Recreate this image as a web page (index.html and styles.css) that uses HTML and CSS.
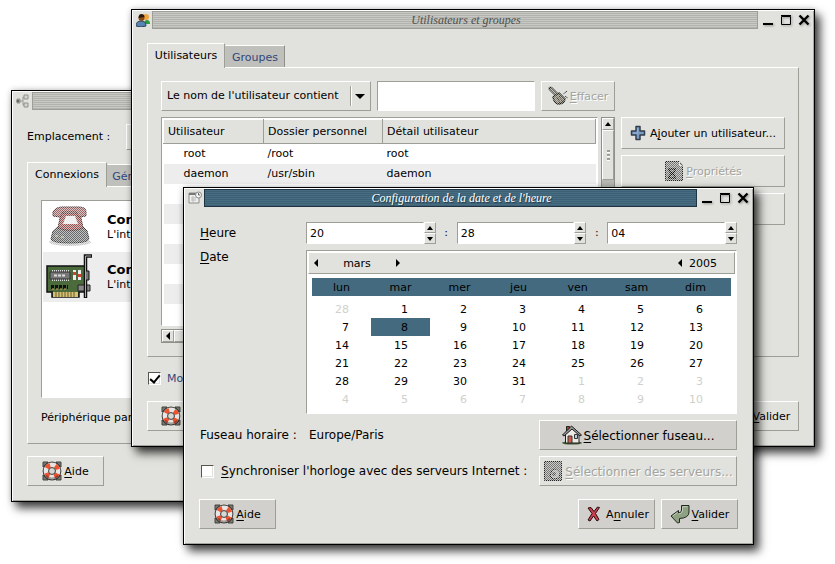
FILE: index.html
```html
<!DOCTYPE html>
<html lang="fr">
<head>
<meta charset="utf-8">
<title>Configuration du système</title>
<link rel="stylesheet" href="styles.css">
</head>
<body>
<svg class="defs" aria-hidden="true">
  <defs>
    <pattern id="stipple" width="2" height="2" patternUnits="userSpaceOnUse"><path d="M0 0h1v1H0zM1 1h1v1H1z" fill="#e1e2dd"/></pattern>
    <pattern id="stipple-white" width="2" height="2" patternUnits="userSpaceOnUse"><path d="M0 0h1v1H0zM1 1h1v1H1z" fill="#fff"/></pattern>
    <symbol id="i-help" viewBox="0 0 20 20">
      <path d="M1 1h5l-5 5zM19 1v5l-5-5zM19 19h-5l5-5zM1 19v-5l5 5z" fill="#777872" stroke="#44453f"/>
      <circle cx="10" cy="10" r="6.200" fill="none" stroke="#3a3a38" stroke-width="6.400"/>
      <circle cx="10" cy="10" r="6" fill="none" stroke="#e6e6e4" stroke-width="4.800"/>
      <circle cx="10" cy="10" r="6" fill="none" stroke="#ee5230" stroke-width="4.600" stroke-dasharray="4.200 5.220" stroke-dashoffset="-2.600"/>
      <path d="M4 14.500a7.500 7.500 0 0 0 12 0" fill="none" stroke="#000" stroke-opacity=".3" stroke-width="2"/>
      <circle cx="10" cy="10" r="3.400" fill="#d8d9d4" stroke="#444"/>
    </symbol>
    <symbol id="i-cancel" viewBox="0 0 20 20">
      <path d="M4 4l3-.5 3 4L13.500 3l2 .5-4 6 3.500 6-2 1.500-3.500-5L6 17l-2-1 4-6.500z" fill="#c8414f" stroke="#2b0d10"/>
    </symbol>
    <symbol id="i-ok" viewBox="0 0 20 20">
      <path d="M11.500 1.500h7.500v6.500q0 6-9.500 6.500v4L7.500 19 1 12l7.500-5.500V9q3 0 3-3z" fill="#8ea183" stroke="#20281e"/>
      <path d="M12.500 2.700h5M3 11.800l4.500-3.300M12.500 3v4q-1 3-4 3" stroke="#c2cfb8" fill="none"/>
    </symbol>
    <symbol id="i-home" viewBox="0 0 20 20">
      <ellipse cx="10" cy="18" rx="10" ry="1.600" fill="#3e5a35"/>
      <path d="M3.500 9v9H17V9L10 3z" fill="#eceae4" stroke="#222"/>
      <path d="M4.500 6V1.500h3V4z" fill="#b6402f" stroke="#222"/>
      <path d="M.5 10L9.500 1l10 9-1.500 1-8-7-8 7z" fill="#999" stroke="#1b1b1b"/>
      <path d="M6 11h4v7H6z" fill="#d0604b" stroke="#333"/>
      <path d="M12.500 9.500h3v4h-3z" fill="#bcd" stroke="#333"/>
    </symbol>
    <symbol id="i-plus" viewBox="0 0 16 16">
      <path d="M6 1.500h4V6h4.500v4H10v4.500H6V10H1.500V6H6z" fill="#7b9cc4" stroke="#333c48" stroke-width="1.500" stroke-linejoin="round"/>
      <path d="M7.500 3v5H3" fill="none" stroke="#93b0d4"/>
    </symbol>
    <symbol id="i-clear" viewBox="0 0 20 20">
      <path d="M2.500 2.500L10 10" stroke="#22231f" stroke-width="4" stroke-linecap="round"/>
      <path d="M2.500 2.500l7 7" stroke="#a5a298" stroke-width="1.500"/>
      <path d="M5 11l6-4 6 6q-1 5-7 5-4-1-5-7z" fill="#8b8573" stroke="#22211c" stroke-width="1.500"/>
      <path d="M9 11l3 6M11 10l4 6M15 8l4-3M17 10l3 2" stroke="#36342c"/>
      <rect width="20" height="20" fill="url(#stipple)" opacity=".6"/>
    </symbol>
    <symbol id="i-props" viewBox="0 0 18 20">
      <path d="M.5.500h14l3 3.500v15.500H.5z" fill="#777" stroke="#222"/>
      <path d="M3 8h8M3 17h8M4 8q0 3 3 4.500-3 1.500-3 4.500M10 8q0 3-3 4.500 3 1.500 3 4.500" stroke="#111" fill="none" stroke-width="1.500"/>
      <path d="M14.500 1v3.500h3" stroke="#eee" fill="none"/>
      <rect width="18" height="20" fill="url(#stipple)" opacity=".8"/>
    </symbol>
    <symbol id="i-server" viewBox="0 0 18 20">
      <path d="M.5.500h17v19H.5z" fill="#777" stroke="#222"/>
      <path d="M6 15l2-6 4-1 4 4-1 5-6 1z" fill="#aaa" stroke="#222"/>
      <circle cx="10" cy="13" r="2" fill="#555"/>
      <rect width="18" height="20" fill="url(#stipple)" opacity=".8"/>
    </symbol>
    <symbol id="w-min" viewBox="0 0 12 12"><path d="M1 10h10" stroke="#000" stroke-width="2"/></symbol>
    <symbol id="w-max" viewBox="0 0 12 12"><path d="M1.500 2.500h9v8h-9zM1 1.500h10" fill="none" stroke="#000"/></symbol>
    <symbol id="w-close" viewBox="0 0 12 12"><path d="M1.500 1.500l9 9M10.500 1.500l-9 9" stroke="#000" stroke-width="2.400"/></symbol>
    <symbol id="a-up" viewBox="0 0 6 4"><path d="M0 4h6L3 0z"/></symbol>
    <symbol id="a-down" viewBox="0 0 6 4"><path d="M0 0h6L3 4z"/></symbol>
    <symbol id="a-left" viewBox="0 0 4 8"><path d="M4 0v8L0 4z"/></symbol>
    <symbol id="a-right" viewBox="0 0 4 8"><path d="M0 0v8l4-4z"/></symbol>
  </defs>
</svg>

<main class="desktop">

  <section class="window window-network" aria-label="Réseau">
    <header class="titlebar">
      <svg class="app-icon" viewBox="0 0 14 14" aria-hidden="true"><path d="M4 7h3M7 7V3h2M7 7v4h2" stroke="#999" fill="none"/><path d="M1 5h3v4H1zM8 1h4v4H8zM8 9h4v4H8z" fill="#d4d4d0" stroke="#90918c"/><circle cx="2" cy="7" r="1.500" fill="#666"/></svg>
      <h2 class="title"></h2>
    </header>
    <div class="body">
      <div class="location">
        <label for="place">Emplacement :</label>
        <select id="place" class="raised place"><option></option></select>
      </div>
      <nav class="tabs tabs-network"><button class="tab active">Connexions</button><button class="tab">Général</button></nav>
      <div class="panel network-panel">
        <ul class="sunken connections">
          <li>
            <svg viewBox="0 0 48 46" aria-hidden="true">
              <ellipse cx="25" cy="38" rx="21" ry="4" fill="#c6c6c6"/>
              <path d="M14 22h23l5 5 2 8q-2 4-19 4T6 35l2-8z" fill="#66686a" stroke="#333"/>
              <path d="M16 9h19l3 15q-12 5-25 0z" fill="#955252" stroke="#4c3030"/>
              <path d="M8 8q3-5 9-5h17q7 0 7 5v4l-7 1-3-5H18l-3 5-7-1z" fill="#9c6a68" stroke="#4c3030"/>
              <path d="M21 12h9l3 8H18z" fill="#e8e8e8"/><path d="M10 32h3M16 33h3" stroke="#d6cf7a"/>
              <rect width="48" height="46" fill="url(#stipple-white)" opacity=".6"/>
            </svg>
            <div><strong>Connexion</strong><span>L'interface</span></div>
          </li>
          <li>
            <svg viewBox="0 0 48 46" aria-hidden="true">
              <path d="M2 12h38v26h-6v5H7v-5H2z" fill="#4c6b3d" stroke="#111" stroke-width="1.500"/>
              <path d="M8 38h25v5H8z" fill="#d6c277"/><path d="M11 38v5M14 38v5M17 38v5M20 38v5M23 38v5M26 38v5M29 38v5" stroke="#6a5a28"/>
              <path d="M7 17h17M7 26h17" stroke="#ddd" stroke-width="2" stroke-dasharray="1 1"/>
              <path d="M5 18h20v7H5z" fill="#777" stroke="#333"/><path d="M9 21.500h12" stroke="#ddd" stroke-width="2" stroke-dasharray="3 1"/>
              <path d="M29.500 16v10M34.500 16v10" stroke="#eee" stroke-width="3"/><path d="M29.500 18v3M34.500 20v3" stroke="#c43" stroke-width="3"/>
              <path d="M6 33h17" stroke="#111" stroke-width="4" stroke-dasharray="3 1"/><path d="M7 35h15" stroke="#d9ad55" stroke-dasharray="2 2"/>
              <path d="M33 31h12v6H33z" fill="#888" stroke="#222"/>
              <path d="M47 2h-6.500v42" fill="none" stroke="#111" stroke-width="3.500"/><path d="M46 2h-5.500v41" fill="none" stroke="#aaa"/>
              <path d="M41 17h3v9h-3" fill="#777" stroke="#111"/>
            </svg>
            <div><strong>Connexion</strong><span>L'interface</span></div>
          </li>
        </ul>
        <p class="gateway">Périphérique par</p>
      </div>
      <footer class="actions"><button class="raised button"><svg class="icon" aria-hidden="true"><use href="#i-help"/></svg><span><u>A</u>ide</span></button></footer>
    </div>
  </section>

  <section class="window window-users" aria-label="Utilisateurs et groupes">
    <header class="titlebar">
      <svg class="app-icon" viewBox="0 0 14 14" aria-hidden="true"><path d="M8 11q0-4 3-4t3 4z" fill="#2f9a3b"/><circle cx="10" cy="4" r="3" fill="#f0a63a"/><path d="M0 13q0-5 5-5t5 5q-5 2-10 0z" fill="#5684b5" stroke="#345"/><circle cx="5.500" cy="5" r="3" fill="#8a4c15"/><path d="M2.500 5q0-4 3-4t3 3z" fill="#2a1a10"/></svg>
      <h2 class="title">Utilisateurs et groupes</h2>
      <div class="controls">
        <button aria-label="Réduire"><svg><use href="#w-min"/></svg></button><button aria-label="Agrandir"><svg><use href="#w-max"/></svg></button><button aria-label="Fermer"><svg><use href="#w-close"/></svg></button>
      </div>
    </header>
    <div class="body">
      <nav class="tabs tabs-users"><button class="tab active">Utilisateurs</button><button class="tab">Groupes</button></nav>
      <div class="panel">
        <div class="search">
          <div class="combo">
            <select class="raised" aria-label="Critère"><option>Le nom de l'utilisateur contient</option></select>
            <span class="combo-arrow"><svg viewBox="0 0 10 5" aria-hidden="true"><path d="M0 0h10L5 5z"/></svg></span>
          </div>
          <input class="sunken query" type="text" aria-label="Recherche">
          <button class="raised button" disabled><svg class="icon" aria-hidden="true"><use href="#i-clear"/></svg><span><u>E</u>ffacer</span></button>
        </div>
        <div class="manage">
          <div class="scroller">
            <div class="sunken tree">
              <table>
                <colgroup><col class="c-user"><col class="c-home"><col></colgroup>
                <thead><tr><th>Utilisateur</th><th>Dossier personnel</th><th>Détail utilisateur</th></tr></thead>
                <tbody>
                  <tr><td>root</td><td>/root</td><td>root</td></tr>
                  <tr><td>daemon</td><td>/usr/sbin</td><td>daemon</td></tr>
                  <tr><td></td><td></td><td></td></tr><tr><td></td><td></td><td></td></tr><tr><td></td><td></td><td></td></tr><tr><td></td><td></td><td></td></tr><tr><td></td><td></td><td></td></tr><tr><td></td><td></td><td></td></tr><tr><td></td><td></td><td></td></tr>
                </tbody>
              </table>
            </div>
            <div class="vscroll"><button class="raised" aria-label="Monter"><svg class="arrow-v"><use href="#a-up"/></svg></button><div class="raised thumb"></div></div>
            <div class="hscroll"><button class="raised" aria-label="Gauche"><svg class="arrow-h"><use href="#a-left"/></svg></button><div class="raised thumb"></div></div>
          </div>
          <div class="side">
            <button class="raised button"><svg class="icon-small" aria-hidden="true"><use href="#i-plus"/></svg><span>A<u>j</u>outer un utilisateur...</span></button>
            <button class="raised button" disabled><svg class="icon" aria-hidden="true"><use href="#i-props"/></svg><span><u>P</u>ropriétés</span></button>
            <button class="raised button" disabled aria-label="Supprimer"></button>
          </div>
        </div>
      </div>
      <div class="show-all"><input class="check" type="checkbox" id="all" checked><label for="all">Mon</label></div>
      <footer class="actions">
        <button class="raised button" aria-label="Aide"><svg class="icon" aria-hidden="true"><use href="#i-help"/></svg></button>
        <button class="raised button push"><svg class="icon" aria-hidden="true"><use href="#i-ok"/></svg><span><u>V</u>alider</span></button>
      </footer>
    </div>
  </section>

  <section class="window window-time focused" aria-label="Configuration de la date et de l'heure">
    <header class="titlebar">
      <svg class="app-icon" viewBox="0 0 14 14" aria-hidden="true"><path d="M1 2h10v10H1z" fill="#eee" stroke="#8c8d88"/><path d="M1 3h10" stroke="#777" stroke-width="2"/><path d="M3 7h5M3 9h5M5 5v6" stroke="#bbb"/><circle cx="10.500" cy="4" r="3" fill="#f6f6f6" stroke="#888"/><path d="M10.500 2v2H12" stroke="#666" fill="none"/></svg>
      <h2 class="title">Configuration de la date et de l'heure</h2>
      <div class="controls">
        <button aria-label="Réduire"><svg><use href="#w-min"/></svg></button><button aria-label="Agrandir"><svg><use href="#w-max"/></svg></button><button aria-label="Fermer"><svg><use href="#w-close"/></svg></button>
      </div>
    </header>
    <div class="body">
      <form class="form">
        <div class="line">
          <label class="name" for="hour"><u>H</u>eure</label>
          <div class="time">
            <div class="spin"><input id="hour" class="sunken" type="text" value="20"><button type="button" class="raised" aria-label="Plus"><svg class="arrow-v"><use href="#a-up"/></svg></button><button type="button" class="raised" aria-label="Moins"><svg class="arrow-v"><use href="#a-down"/></svg></button></div>
            <span class="colon">:</span>
            <div class="spin"><input class="sunken" type="text" value="28" aria-label="Minutes"><button type="button" class="raised" aria-label="Plus"><svg class="arrow-v"><use href="#a-up"/></svg></button><button type="button" class="raised" aria-label="Moins"><svg class="arrow-v"><use href="#a-down"/></svg></button></div>
            <span class="colon">:</span>
            <div class="spin"><input class="sunken" type="text" value="04" aria-label="Secondes"><button type="button" class="raised" aria-label="Plus"><svg class="arrow-v"><use href="#a-up"/></svg></button><button type="button" class="raised" aria-label="Moins"><svg class="arrow-v"><use href="#a-down"/></svg></button></div>
          </div>
        </div>
        <div class="line line-top">
          <span class="name"><u>D</u>ate</span>
          <div class="sunken calendar">
            <div class="raised cal-head">
              <button type="button" aria-label="Mois précédent"><svg class="arrow-h"><use href="#a-left"/></svg></button><span class="month">mars</span><button type="button" aria-label="Mois suivant"><svg class="arrow-h"><use href="#a-right"/></svg></button>
              <button type="button" class="push" aria-label="Année précédente"><svg class="arrow-h"><use href="#a-left"/></svg></button><span class="year">2005</span>
            </div>
            <table>
              <thead><tr><th>lun</th><th>mar</th><th>mer</th><th>jeu</th><th>ven</th><th>sam</th><th>dim</th></tr></thead>
              <tbody>
                <tr><td class="other">28</td><td>1</td><td>2</td><td>3</td><td>4</td><td>5</td><td>6</td></tr>
                <tr><td>7</td><td class="selected">8</td><td>9</td><td>10</td><td>11</td><td>12</td><td>13</td></tr>
                <tr><td>14</td><td>15</td><td>16</td><td>17</td><td>18</td><td>19</td><td>20</td></tr>
                <tr><td>21</td><td>22</td><td>23</td><td>24</td><td>25</td><td>26</td><td>27</td></tr>
                <tr><td>28</td><td>29</td><td>30</td><td>31</td><td class="other">1</td><td class="other">2</td><td class="other">3</td></tr>
                <tr class="other"><td>4</td><td>5</td><td>6</td><td>7</td><td>8</td><td>9</td><td>10</td></tr>
              </tbody>
            </table>
          </div>
        </div>
        <div class="line">
          <span class="name">Fuseau horaire :</span><span class="zone">Europe/Paris</span>
          <button type="button" class="raised button wide push"><svg class="icon" aria-hidden="true"><use href="#i-home"/></svg><span><u>S</u>électionner fuseau...</span></button>
        </div>
        <div class="line">
          <input class="check" type="checkbox" id="sync"><label for="sync" class="sync"><u>S</u>ynchroniser l'horloge avec des serveurs Internet :</label>
          <button type="button" class="raised button wide push" disabled><svg class="icon" aria-hidden="true"><use href="#i-server"/></svg><span><u>S</u>électionner des serveurs...</span></button>
        </div>
      </form>
      <footer class="actions">
        <button class="raised button"><svg class="icon" aria-hidden="true"><use href="#i-help"/></svg><span><u>A</u>ide</span></button>
        <button class="raised button push"><svg class="icon" aria-hidden="true"><use href="#i-cancel"/></svg><span>A<u>n</u>nuler</span></button>
        <button class="raised button"><svg class="icon" aria-hidden="true"><use href="#i-ok"/></svg><span><u>V</u>alider</span></button>
      </footer>
    </div>
  </section>
</main>
</body>
</html>
```
FILE: styles.css
```css
* { box-sizing: border-box; }

body {
  margin: 0;
  background: #fff;
  color: #000;
  font: 11px/14px "DejaVu Sans", sans-serif;
}

button, input, select { font: inherit; color: inherit; margin: 0; padding: 0; border-radius: 0; }
button { border: 0; background: none; }
svg { display: block; flex: none; }
u { text-underline-offset: 2px; text-decoration-thickness: 1px; text-decoration-skip-ink: none; }
table { border-collapse: collapse; table-layout: fixed; width: 100%; }
th { font-weight: normal; text-align: left; }
p, ul, h2 { margin: 0; padding: 0; list-style: none; }

.defs { position: absolute; width: 0; height: 0; }
.desktop { position: relative; min-height: 100vh; overflow: hidden; }

/* Bevels */
.raised { border: 1px solid; border-color: #fff #9d9e96 #9d9e96 #fff; background: #e1e2dd; }
.sunken { border: 1px solid; border-color: #9d9e96 #fff #fff #9d9e96; background: #fff; }

/* Windows */
.window {
  position: absolute;
  border: 1px solid #000;
  background: #e1e2dd;
  box-shadow: inset 1px 1px #fff, inset -1px -1px #a5a69f, 5px 6px 9px rgba(0, 0, 0, .75), 0 0 6px rgba(0, 0, 0, .2);
  padding: 1px;
}
.window-network { left: 11px; top: 90px; width: 420px; }
.window-users { left: 131px; top: 9px; width: 684px; }
.window-time { left: 183px; top: 187px; width: 571px; }

.titlebar { display: flex; height: 18px; }
.app-icon { width: 14px; height: 14px; margin: 2px 2px 0 3px; }
.title {
  flex: 1;
  padding-left: 22px;
  border: 1px solid;
  border-color: #9d9e96;
  background: repeating-linear-gradient(#c8c9c4 0 1px, #b2b3ae 1px 2px);
  color: #50514d;
  font: italic 12px/17px "Liberation Serif", serif;
  text-align: center;
}
.focused .title {
  border-color: #1f3442;
  background: repeating-linear-gradient(#466d82 0 1px, #3d6074 1px 2px);
  color: #fff;
  text-shadow: 1px 1px #233c4a;
}
.controls { display: flex; padding: 3px 0 0 1px; }
.controls button { width: 18px; display: flex; justify-content: center; filter: drop-shadow(1px 1px 1px rgba(0, 0, 0, .35)); }
.controls svg { width: 12px; height: 12px; }

.body { padding: 14px; }
.actions { display: flex; gap: 6px; }
.push { margin-left: auto; }

.button { display: flex; align-items: center; justify-content: center; gap: 2px; min-width: 77px; height: 30px; white-space: nowrap; }
.button span { padding-top: 2px; }
.focused .button:not(:disabled) { background: #d2d0cc; }
.button:disabled { color: #a3a49d; text-shadow: 1px 1px #fff; }
.icon { width: 20px; height: 20px; }
.icon-small { width: 16px; height: 16px; margin-right: 2px; }

/* Tabs */
.tabs { display: grid; justify-content: start; align-items: end; height: 24px; }
.tabs-network { grid-template-columns: 80px 54px; }
.tabs-users { grid-template-columns: 78px 60px; }
.tab { height: 22px; padding-top: 2px; border: 1px solid; border-color: #fff #8f908a transparent #c0c1bc; border-bottom: 0; background: #bfc0bb; color: #32477c; }
.tab.active { height: 25px; margin-bottom: -1px; padding: 0; border-color: #fff #9d9e96 transparent #fff; background: #e1e2dd; color: #000; position: relative; z-index: 1; }
.panel { border: 1px solid; border-color: #fff #9d9e96 #9d9e96 #fff; padding: 13px; }

/* Network */
.location { display: flex; align-items: center; height: 26px; margin-bottom: 12px; }
.place { width: 160px; height: 26px; margin-left: 16px; appearance: none; }
.network-panel { margin-bottom: 12px; }
.connections { min-height: 198px; padding: 1px; }
.connections li { display: flex; align-items: center; gap: 14px; height: 50px; padding-left: 2px; }
.connections li:nth-child(even) { background: #ededed; }
.connections svg { width: 48px; height: 46px; }
.connections strong { display: block; font-size: 13px; line-height: 16px; }
.connections span { display: block; }
.gateway { padding: 13px 0 5px; }

/* Users */
.search { display: flex; gap: 6px; margin-bottom: 6px; }
.combo { display: grid; width: 210px; }
.combo > * { grid-area: 1 / 1; }
.combo select { appearance: none; height: 30px; padding-left: 5px; }
.combo-arrow { justify-self: end; align-self: center; display: flex; align-items: center; width: 21px; height: 20px; padding-left: 4px; border-left: 1px solid #9d9e96; box-shadow: inset 1px 0 #fff; pointer-events: none; }
.combo-arrow svg { width: 10px; height: 5px; }
.query { width: 158px; height: 30px; }
.search .button { min-width: 74px; }

.manage { display: flex; gap: 6px; }
.scroller { flex: 1; display: grid; grid-template-columns: 1fr 14px; grid-template-rows: auto 14px; gap: 3px; }
.tree { padding: 1px; }
.tree th { height: 24px; padding: 0 4px; border: 1px solid; border-color: #fff #9d9e96 #9d9e96 #fff; background: #e1e2dd; white-space: nowrap; }
.tree td { height: 20px; padding: 0 4px; }
.tree td:first-child { padding-left: 20px; }
.tree tbody tr:nth-child(even) { background: #ededed; }
.c-user { width: 100px; }
.c-home { width: 119px; }
.vscroll, .hscroll { display: flex; border: 1px solid #8f908a; background: #b7b8b3; }
.vscroll { flex-direction: column; }
.vscroll button { display: grid; place-items: center; height: 12px; }
.vscroll .thumb { height: 50px; display: grid; place-items: center; }
.vscroll .thumb::after { content: ""; width: 3px; height: 11px; background: repeating-linear-gradient(#9d9e96 0 2px, #fff 2px 3px, transparent 3px 4px); }
.hscroll button { display: grid; place-items: center; width: 12px; }
.hscroll .thumb { width: 200px; }
.arrow-v { width: 6px; height: 4px; }
.arrow-h { width: 4px; height: 8px; }

.side { display: flex; flex-direction: column; gap: 6px; width: 164px; }
.side .button { height: 32px; }
.show-all { display: flex; align-items: center; gap: 6px; height: 16px; margin: 14px 0; padding-left: 1px; color: #32477c; }
.check { appearance: none; width: 13px; height: 13px; border: 1px solid; border-color: #55564f #fff #fff #55564f; background: #fff; box-shadow: inset -1px -1px #e1e2dd; display: grid; place-items: center; }
.check:checked::after { content: ""; width: 4px; height: 8px; margin-bottom: 3px; border: solid #000; border-width: 0 2px 2px 0; transform: rotate(40deg); }
.window-users .actions .button:first-child { justify-content: flex-start; padding-left: 13px; }

/* Date and time */
.form { padding: 1px; margin-bottom: 12px; }
.line { display: flex; align-items: center; margin-bottom: 6px; font-size: 12px; }
.line:last-child { margin-bottom: 0; }
.line-top { align-items: flex-start; }
.name { width: 106px; flex: none; }
.time { flex: 1; display: flex; align-items: center; font-size: 11px; }
.spin { flex: 1; min-width: 0; display: grid; grid-template: 11px 11px / 1fr 12px; }
.spin input { grid-row: span 2; min-width: 0; padding: 1px 0 0 3px; }
.spin button { display: grid; place-items: center; }
.colon { width: 21px; text-align: center; }
.calendar { flex: 1; height: 164px; padding: 1px; font-size: 11px; }
.cal-head { display: flex; align-items: center; height: 22px; padding: 1px 17px 0 5px; margin-bottom: 4px; }
.cal-head button { padding-bottom: 2px; }
.month { width: 78px; text-align: center; }
.year { margin-left: 7px; }
.calendar table { width: auto; min-width: calc(100% - 8px); margin: 0 4px; }
.calendar th { height: 18px; padding: 2px 0 0; background: #436a7e; text-align: center; width: 59px; }
.calendar th:last-child { width: 65px; padding-right: 6px; }
.calendar td { height: 18px; padding: 2px 22px 0 0; text-align: right; }
.calendar td:last-child { padding-right: 28px; }
.calendar tbody::before { content: ""; display: table-row; height: 4px; }
.calendar .selected { background: #436a7e; }
.calendar .other { color: #d0d0cc; }
.zone { padding-left: 3px; }
.sync { margin-left: 7px; }
.wide { width: 198px; }
.line .check { margin-left: 1px; }
```
